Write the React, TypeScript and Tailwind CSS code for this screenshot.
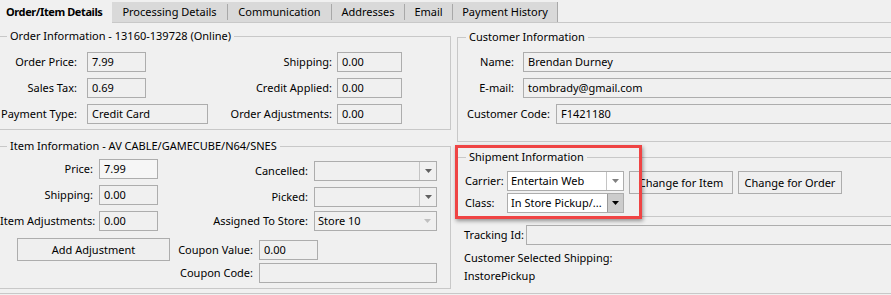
import React from "react";

const TB = ({ w, value = "", bg = "bg-[#f0f0f0]" }: { w: string; value?: string; bg?: string }) => (
  <div className={`${w} ${bg} h-[20px] border border-[#adadad] pl-[4px] flex items-center whitespace-nowrap overflow-hidden`}>
    {value}
  </div>
);

const Arrow = ({ color }: { color: string }) => (
  <svg width="7" height="4" viewBox="0 0 7 4">
    <path d="M0 0H7L3.5 4Z" fill={color} />
  </svg>
);

const Combo = ({
  w,
  value = "",
  bg = "bg-[#f0f0f0]",
  arrow = "#606060",
  sep = true,
  active = false,
}: {
  w: string;
  value?: string;
  bg?: string;
  arrow?: string;
  sep?: boolean;
  active?: boolean;
}) => (
  <div className={`${w} ${bg} h-[20px] border border-[#adadad] flex`}>
    <div className="flex-1 pl-[3px] flex items-center whitespace-nowrap overflow-hidden">{value}</div>
    {active ? (
      <div className="w-[16px] bg-[#cccccc] border-l border-[#9a9a9a] flex items-center justify-center">
        <Arrow color="#000000" />
      </div>
    ) : (
      <div className={`w-[17px] flex items-center justify-center ${sep ? "border-l border-[#c4c4c4]" : ""}`}>
        <Arrow color={arrow} />
      </div>
    )}
  </div>
);

const Btn = ({ w, h = "h-[23px]", children }: { w: string; h?: string; children: React.ReactNode }) => (
  <div className={`${w} ${h} border border-[#adadad] bg-[#efefef] flex items-center justify-center whitespace-nowrap`}>
    {children}
  </div>
);

const tabs: { label: string; w: string }[] = [
  { label: "Processing Details", w: "w-[116px]" },
  { label: "Communication", w: "w-[104px]" },
  { label: "Addresses", w: "w-[73px]" },
  { label: "Email", w: "w-[48px]" },
  { label: "Payment History", w: "w-[105px]" },
];

export default function App() {
  return (
    <div className="w-[891px] h-[295px] overflow-hidden bg-[#f0f0f0] font-['Noto_Sans',sans-serif] text-[11px] leading-[16px] text-black">
      {/* Tabs */}
      <div className="flex h-[23px]">
        <div className="w-[112px] h-[23px] pl-[6px] flex items-center font-bold tracking-[-0.4px] whitespace-nowrap">Order/Item Details</div>
        <div className="flex-1 border-b border-[#c8c8c8]">
          <div className="flex mt-[2px] h-[20px]">
            {tabs.map((t, i) => (
              <div
                key={t.label}
                className={`${t.w} h-[20px] bg-[#d9d9d9] flex items-center relative ${
                  i === tabs.length - 1 ? "border-r border-[#a8a8a8]" : ""
                }`}
              >
                <span className="flex-1 text-center">{t.label}</span>
                {i < tabs.length - 1 && <span className="w-px h-[16px] bg-[#a8a8a8]" />}
              </div>
            ))}
          </div>
        </div>
      </div>

      {/* Tab page */}
      <div className="flex h-[271px] border-b border-[#c8c8c8]">
        {/* Left column */}
        <div className="w-[451px] flex flex-col">
          <fieldset className="mt-[5px] w-[451px] border border-l-0 border-[#c8c8c8]">
            <legend className="ml-[7px] px-[3px] leading-[16px]">Order Information - 13160-139728 (Online)</legend>
            <div className="pt-[8px] pb-[5px] flex">
              <div className="grid grid-cols-[77px_121px] gap-x-[10px] gap-y-[6px] items-center">
                <div className="text-right">Order Price:</div>
                <TB w="w-[59px]" value="7.99" />
                <div className="text-right">Sales Tax:</div>
                <TB w="w-[59px]" value="0.69" />
                <div className="text-right whitespace-nowrap">Payment Type:</div>
                <TB w="w-[121px]" value="Credit Card" />
              </div>
              <div className="ml-[4px] grid grid-cols-[120px_65px] gap-x-[5px] gap-y-[6px] items-center">
                <div className="text-right">Shipping:</div>
                <TB w="w-[65px]" value="0.00" />
                <div className="text-right">Credit Applied:</div>
                <TB w="w-[65px]" value="0.00" />
                <div className="text-right whitespace-nowrap">Order Adjustments:</div>
                <TB w="w-[65px]" value="0.00" />
              </div>
            </div>
          </fieldset>

          <fieldset className="mt-[8px] w-[451px] border border-l-0 border-[#c8c8c8]">
            <legend className="ml-[7px] px-[3px] leading-[16px]">Item Information - AV CABLE/GAMECUBE/N64/SNES</legend>
            <div className="pt-[5px] pb-[5px]">
              <div className="flex">
                <div className="grid grid-cols-[93px_59px] gap-x-[6px] gap-y-[6px] items-center">
                  <div className="text-right">Price:</div>
                  <TB w="w-[59px]" value="7.99" bg="bg-[#f6f6f6]" />
                  <div className="text-right">Shipping:</div>
                  <TB w="w-[59px]" value="0.00" />
                  <div className="text-right whitespace-nowrap">Item Adjustments:</div>
                  <TB w="w-[59px]" value="0.00" />
                </div>
                <div className="flex flex-col">
                  <div className="mt-[2px] flex items-center">
                    <div className="w-[150px] text-right">Cancelled:</div>
                    <div className="ml-[6px]">
                      <Combo w="w-[123px]" />
                    </div>
                  </div>
                  <div className="mt-[6px] flex items-center">
                    <div className="w-[150px] text-right">Picked:</div>
                    <div className="ml-[6px]">
                      <Combo w="w-[123px]" />
                    </div>
                  </div>
                  <div className="mt-[4px] flex items-center">
                    <div className="w-[150px] text-right whitespace-nowrap">Assigned To Store:</div>
                    <div className="ml-[6px]">
                      <Combo w="w-[123px]" value="Store 10" sep={false} arrow="#c0c0c0" />
                    </div>
                  </div>
                </div>
              </div>
              <div className="mt-[7px] flex items-start">
                <div className="ml-[17px]">
                  <Btn w="w-[153px]">Add Adjustment</Btn>
                </div>
                <div className="mt-[2px] grid grid-cols-[83px_auto] gap-x-[6px] gap-y-[3px] items-center">
                  <div className="text-right whitespace-nowrap">Coupon Value:</div>
                  <TB w="w-[59px]" value="0.00" />
                  <div className="text-right whitespace-nowrap">Coupon Code:</div>
                  <TB w="w-[178px]" />
                </div>
              </div>
            </div>
          </fieldset>
        </div>

        {/* Right column */}
        <div className="ml-[6px] w-[460px] flex flex-col relative">
          <fieldset className="mt-[6px] w-[460px] border border-[#c8c8c8]">
            <legend className="ml-[8px] px-[3px] leading-[16px]">Customer Information</legend>
            <div className="pt-[7px] pb-[17px] flex flex-col gap-[6px]">
              <div className="flex items-center">
                <div className="w-[56px] text-right">Name:</div>
                <div className="ml-[9px]">
                  <TB w="w-[400px]" value="Brendan Durney" />
                </div>
              </div>
              <div className="flex items-center">
                <div className="w-[56px] text-right">E-mail:</div>
                <div className="ml-[9px]">
                  <TB w="w-[400px]" value="tombrady@gmail.com" />
                </div>
              </div>
              <div className="flex items-center">
                <div className="w-[92px] text-right whitespace-nowrap">Customer Code:</div>
                <div className="ml-[6px]">
                  <TB w="w-[400px]" value="F1421180" />
                </div>
              </div>
            </div>
          </fieldset>

          <fieldset className="mt-[7px] w-[460px] border border-[#c8c8c8]">
            <legend className="ml-[8px] px-[3px] leading-[16px]">Shipment Information</legend>
            <div className="pt-[6px] pb-[3px] flex items-start">
              <div className="flex flex-col gap-[2px]">
                <div className="flex items-center">
                  <div className="w-[49px] pl-[7px]">Carrier:</div>
                  <Combo w="w-[117px]" value="Entertain Web" bg="bg-white" arrow="#808080" />
                </div>
                <div className="flex items-center">
                  <div className="w-[49px] pl-[7px]">Class:</div>
                  <Combo w="w-[117px]" value="In Store Pickup/..." bg="bg-white" active />
                </div>
              </div>
              <div className="ml-[5px]">
                <Btn w="w-[104px]">Change for Item</Btn>
              </div>
              <div className="ml-[5px]">
                <Btn w="w-[104px]">Change for Order</Btn>
              </div>
            </div>
          </fieldset>

          <div className="mt-[8px] flex items-center">
            <div className="w-[70px] pl-[7px] whitespace-nowrap">Tracking Id:</div>
            <TB w="w-[400px]" />
          </div>
          <div className="mt-[4px] pl-[7px] leading-[18px]">Customer Selected Shipping:</div>
          <div className="pl-[7px] leading-[18px]">InstorePickup</div>

          {/* highlight */}
          <div className="absolute left-[-2px] top-[122px] w-[187px] h-[74px] border-[3px] border-[#ef4444] shadow-[1px_2px_4px_rgba(0,0,0,0.4)] pointer-events-none" />
        </div>
      </div>
    </div>
  );
}
